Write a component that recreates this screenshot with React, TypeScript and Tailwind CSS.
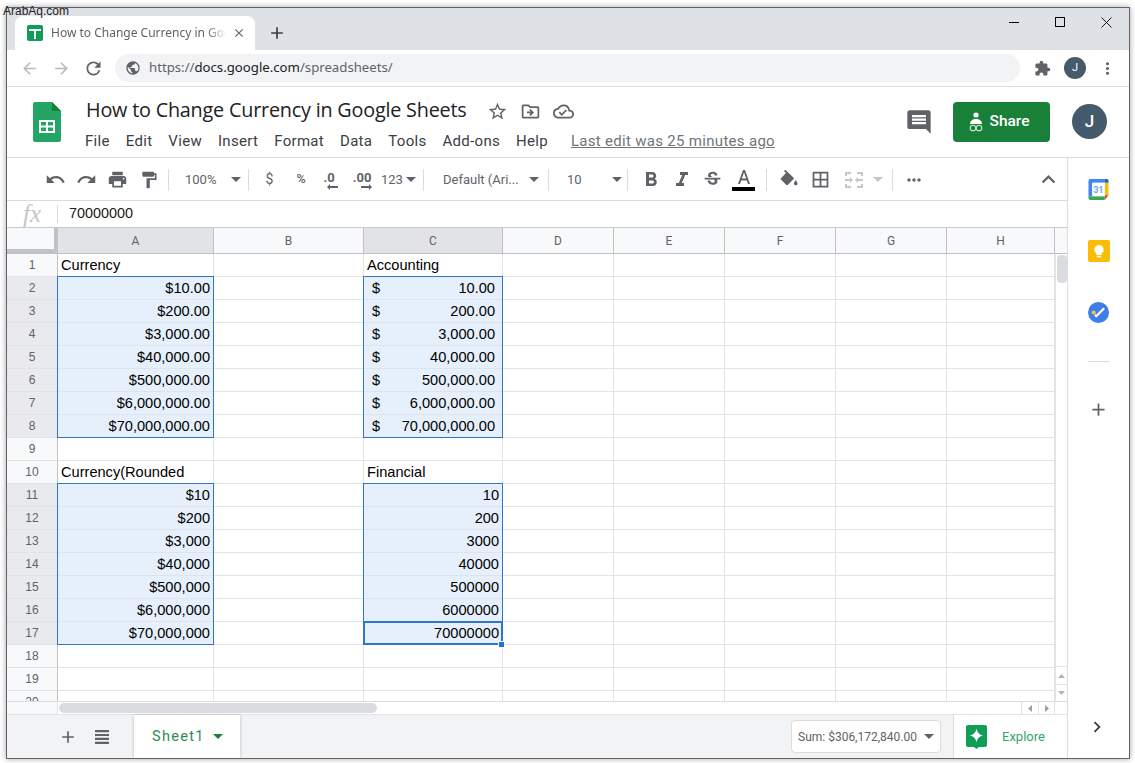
import React from "react";
import {
  MdArrowBack, MdArrowForward, MdRefresh, MdPublic, MdExtension, MdMoreVert, MdAdd, MdClose,
  MdUndo, MdRedo, MdPrint, MdFormatPaint, MdFormatBold, MdFormatItalic, MdStrikethroughS,
  MdBorderAll, MdMoreHoriz, MdKeyboardArrowUp, MdComment, MdStarBorder,
  MdOutlineDriveFileMove, MdOutlineCloudDone, MdChevronRight,
} from "react-icons/md";

const Sep = () => <div className="w-px h-[22px] bg-[#dadce0]" />;

const Caret = ({ className = "" }: { className?: string }) => (
  <svg width="10" height="5" viewBox="0 0 10 5" className={className}>
    <path d="M0 0h10L5 5z" fill="currentColor" />
  </svg>
);

const TB = ({ children, wide }: { children: React.ReactNode; wide?: boolean }) => (
  <div className={`${wide ? "w-[32px]" : "w-[31px]"} h-[24px] flex items-center justify-center text-[#5f6368]`}>{children}</div>
);

const SheetsLogo = () => (
  <svg width="28" height="40" viewBox="0 0 28 40">
    <path d="M2 0h17l9 9v29a2 2 0 0 1-2 2H2a2 2 0 0 1-2-2V2a2 2 0 0 1 2-2z" fill="#23a566" />
    <path d="M19 0l9 9h-9z" fill="#188038" />
    <path d="M6 18h16v13H6z M8 20v3.5h5V20z M15 20v3.5h5V20z M8 25.5V29h5v-3.5z M15 25.5V29h5v-3.5z" fill="#fff" fillRule="evenodd" />
  </svg>
);

const Calendar = () => (
  <svg width="21" height="21" viewBox="0 0 21 22">
    <path d="M2 0h15v4H4v14H0V2a2 2 0 0 1 2-2z" fill="#4285f4" />
    <path d="M17 0h2a2 2 0 0 1 2 2v2h-4z" fill="#1a5fc8" />
    <path d="M17 4h4v13h-4z" fill="#fbbc04" />
    <path d="M0 18h17v4H2a2 2 0 0 1-2-2z" fill="#34a853" />
    <path d="M17 17h4l-4 5z" fill="#ea4335" />
    <rect x="4" y="4" width="13" height="14" fill="#fff" />
    <text x="10.5" y="15" textAnchor="middle" fontSize="9" fontWeight="700" fill="#6f9fe8" fontFamily="Roboto, sans-serif">31</text>
  </svg>
);

const Keep = () => (
  <svg width="22" height="22" viewBox="0 0 22 22">
    <rect width="22" height="22" rx="2" fill="#fbbc04" />
    <path d="M11 5a4.6 4.6 0 0 0-2.6 8.4V15h5.2v-1.6A4.6 4.6 0 0 0 11 5z" fill="#fff" />
    <rect x="8.8" y="15.8" width="4.4" height="1.6" fill="#fff" />
  </svg>
);

const Tasks = () => (
  <svg width="21" height="21" viewBox="0 0 22 22">
    <circle cx="11" cy="11" r="11" fill="#3f7ee8" />
    <path d="M8 15.5l9-9" stroke="#fff" strokeWidth="2.4" fill="none" />
    <path d="M9 15l-1.6-1.6" stroke="#fff" strokeWidth="2.4" fill="none" />
    <circle cx="6" cy="11" r="2.2" fill="#f6bf4f" />
  </svg>
);

const ExploreIcon = () => (
  <svg width="21" height="24" viewBox="0 0 21 24">
    <path d="M2 0h17a2 2 0 0 1 2 2v18a2 2 0 0 1-2 2h-6l-2.5 2L8 22H2a2 2 0 0 1-2-2V2a2 2 0 0 1 2-2z" fill="#0f9d58" />
    <path d="M10.5 3.5c.7 4.2 2.8 6.3 7 7-4.2.7-6.3 2.8-7 7-.7-4.2-2.8-6.3-7-7 4.2-.7 6.3-2.8 7-7z" fill="#fff" />
  </svg>
);

const ShareIcon = () => (
  <svg width="16" height="20" viewBox="0 0 16 20">
    <circle cx="8" cy="3" r="2.6" fill="#fff" />
    <path d="M2 12c0-3 2.5-5 6-5s6 2 6 5z" fill="#fff" />
    <circle cx="5" cy="16" r="2.8" fill="none" stroke="#cfe8d8" strokeWidth="1.1" />
    <circle cx="11" cy="16" r="2.8" fill="none" stroke="#cfe8d8" strokeWidth="1.1" />
  </svg>
);

const MergeIcon = () => (
  <svg width="18" height="16" viewBox="0 0 18 16" fill="#c4c7ca">
    <path d="M0 0h6v2H2v2H0z M12 0h6v4h-2V2h-4z M0 12h2v2h4v2H0z M16 12h2v4h-6v-2h4z" />
    <path d="M0 7h5V5l3 3-3 3V9H0z M18 7h-5V5l-3 3 3 3V9h5z" />
  </svg>
);

const FillIcon = () => (
  <svg width="20" height="18" viewBox="0 0 22 18" className="-mt-[3px]">
    <path d="M8 0L6.6 1.4l2.2 2.2-5.3 5.3c-.6.6-.6 1.5 0 2.1l5.4 5.4c.6.6 1.5.6 2.1 0l5.9-5.9c.6-.6.6-1.5 0-2.1z" fill="currentColor" />
    <path d="M19.5 11.5s-2 2.2-2 3.5c0 1.1.9 2 2 2s2-.9 2-2c0-1.3-2-3.5-2-3.5z" fill="currentColor" />
  </svg>
);

const ColHead = ({ label, sel }: { label: string; sel?: boolean }) => (
  <div
    className={`border-r border-r-[#c0c0c0] flex items-center justify-center text-[12px] text-[#5f6368] ${
      sel ? "bg-[#e1e3e6]" : "bg-[#f8f9fa]"
    }`}
  >
    {label}
  </div>
);

type RowData = { n: number; sel?: boolean; a?: string; aLeft?: boolean; c?: string; cLeft?: boolean; acct?: boolean };

const rows: RowData[] = [
  { n: 1, a: "Currency", aLeft: true, c: "Accounting", cLeft: true },
  { n: 2, sel: true, a: "$10.00", c: "10.00", acct: true },
  { n: 3, sel: true, a: "$200.00", c: "200.00", acct: true },
  { n: 4, sel: true, a: "$3,000.00", c: "3,000.00", acct: true },
  { n: 5, sel: true, a: "$40,000.00", c: "40,000.00", acct: true },
  { n: 6, sel: true, a: "$500,000.00", c: "500,000.00", acct: true },
  { n: 7, sel: true, a: "$6,000,000.00", c: "6,000,000.00", acct: true },
  { n: 8, sel: true, a: "$70,000,000.00", c: "70,000,000.00", acct: true },
  { n: 9 },
  { n: 10, a: "Currency(Rounded", aLeft: true, c: "Financial", cLeft: true },
  { n: 11, sel: true, a: "$10", c: "10" },
  { n: 12, sel: true, a: "$200", c: "200" },
  { n: 13, sel: true, a: "$3,000", c: "3000" },
  { n: 14, sel: true, a: "$40,000", c: "40000" },
  { n: 15, sel: true, a: "$500,000", c: "500000" },
  { n: 16, sel: true, a: "$6,000,000", c: "6000000" },
  { n: 17, sel: true, a: "$70,000,000", c: "70000000" },
  { n: 18 },
  { n: 19 },
  { n: 20 },
];

const cell = "border-r border-b border-[#e2e3e3] h-[23px]";

const Row = ({ r }: { r: RowData }) => (
  <>
    <div
      className={`border-r border-b border-r-[#c0c0c0] border-b-[#e2e3e3] h-[23px] flex items-center justify-center text-[12px] text-[#5f6368] ${
        r.sel ? "bg-[#e8eaed]" : "bg-[#f8f9fa]"
      }`}
    >
      {r.n}
    </div>
    <div className={`${cell} flex items-end leading-[21px] px-[3px] ${r.sel ? "bg-[#e6f0fc]" : ""} ${r.aLeft ? "justify-start" : "justify-end"}`}>
      {r.a}
    </div>
    <div className={cell} />
    <div
      className={`${cell} flex items-end leading-[21px] ${r.sel ? "bg-[#e6f0fc]" : ""} ${r.cLeft ? "justify-start px-[3px]" : r.acct ? "justify-between pl-[8px] pr-[7px]" : "justify-end px-[3px]"}`}
    >
      {r.acct && <span>$</span>}
      <span>{r.c}</span>
    </div>
    <div className={cell} />
    <div className={cell} />
    <div className={cell} />
    <div className={cell} />
    <div className={cell} />
  </>
);

const Select = ({ className }: { className: string }) => (
  <div className={`absolute border border-[#2f75c9] pointer-events-none ${className}`} />
);

export default function App() {
  return (
    <div className="w-[1135px] h-[763px] bg-white relative overflow-hidden font-['Roboto',sans-serif] pt-[7px] pl-[6px]">
      <div className="w-[1124px] h-[752px] border border-[#5f6368] shadow-[0_0_6px_rgba(0,0,0,0.35)] bg-white flex flex-col overflow-hidden">
        {/* Tab strip */}
        <div className="h-[42px] shrink-0 bg-[#dee1e6] flex items-end pl-[8px]">
          <div className="w-[240px] h-[34px] bg-white rounded-t-[8px] flex items-center pl-[12px] pr-[8px]">
            <div className="w-[16px] h-[16px] rounded-[2px] bg-[#0f9d58] relative shrink-0 flex items-center justify-center">
              <svg width="12" height="12" viewBox="0 0 12 12">
                <path d="M0 2h12v2H7v8H5V4H0z" fill="#fff" />
              </svg>
            </div>
            <span className="ml-[8px] w-[176px] overflow-hidden whitespace-nowrap text-[12px] text-[#5f6368] font-['Noto_Sans',sans-serif] [mask-image:linear-gradient(to_right,black_88%,transparent)]">
              How to Change Currency in Google Sheets
            </span>
            <MdClose className="ml-[5px] text-[#5f6368] shrink-0" size={14} />
          </div>
          <div className="h-[34px] flex items-center ml-[12px]">
            <MdAdd size={20} className="text-[#3c4043]" />
          </div>
          <div className="flex-1" />
          <div className="self-start flex items-center h-[28px] text-[#202124]">
            <div className="w-[46px] flex justify-center">
              <div className="w-[10px] h-px bg-black" />
            </div>
            <div className="w-[46px] flex justify-center">
              <div className="w-[10px] h-[10px] border border-black" />
            </div>
            <div className="w-[46px] flex justify-center mr-[0px]">
              <svg width="11" height="11" viewBox="0 0 11 11">
                <path d="M0.5 0.5l10 10M10.5 0.5l-10 10" stroke="#000" strokeWidth="0.9" />
              </svg>
            </div>
          </div>
        </div>

        {/* Chrome toolbar */}
        <div className="h-[37px] shrink-0 border-b border-[#dadce0] flex items-center pl-[6px] text-[#5f6368]">
          <div className="w-[32px] flex justify-center">
            <MdArrowBack size={19} className="text-[#b6b9bd]" />
          </div>
          <div className="w-[32px] flex justify-center">
            <MdArrowForward size={19} className="text-[#b6b9bd]" />
          </div>
          <div className="w-[32px] flex justify-center">
            <MdRefresh size={21} className="text-[#5f6368]" />
          </div>
          <div className="ml-[6px] w-[905px] h-[28px] rounded-full bg-[#f1f3f4] flex items-center pl-[10px]">
            <MdPublic size={16} className="text-[#5f6368]" />
            <span className="ml-[8px] text-[13.2px] font-['Noto_Sans',sans-serif] text-[#5f6368] whitespace-nowrap">
              https://<span className="text-[#202124]">docs.google.com</span>/spreadsheets/
            </span>
          </div>
          <div className="ml-[13px] w-[18px] flex justify-center">
            <MdExtension size={17} className="text-[#5f6368]" />
          </div>
          <div className="ml-[13px] w-[22px] h-[22px] rounded-full bg-[#455a6a] text-white text-[11px] flex items-center justify-center">J</div>
          <div className="ml-[21px] flex justify-center">
            <MdMoreVert size={19} className="text-[#5f6368] -ml-[9px]" />
          </div>
        </div>

        {/* Doc header */}
        <div className="h-[71px] shrink-0 border-b border-[#dadce0] flex relative">
          <div className="pl-[26px] pt-[15px] w-[79px] shrink-0">
            <SheetsLogo />
          </div>
          <div className="flex flex-col">
            <div className="flex items-center h-[26px] mt-[10px]">
              <span className="text-[19.8px] text-[#202124] whitespace-nowrap font-['Open_Sans',sans-serif] tracking-[-0.2px]">
                How to Change Currency in Google Sheets
              </span>
              <div className="flex items-center ml-[20px] text-[#5f6368] gap-[12px] mt-[2px]">
                <MdStarBorder size={21} />
                <MdOutlineDriveFileMove size={21} />
                <MdOutlineCloudDone size={21} />
              </div>
            </div>
            <div className="flex items-center h-[20px] mt-[8px] -ml-[1px] text-[15px] text-[#3c4043] tracking-[0.3px] gap-[16px] whitespace-nowrap">
              <span>File</span>
              <span>Edit</span>
              <span>View</span>
              <span>Insert</span>
              <span>Format</span>
              <span>Data</span>
              <span>Tools</span>
              <span>Add-ons</span>
              <span>Help</span>
              <span className="ml-[7px] underline text-[#70757a]">Last edit was 25 minutes ago</span>
            </div>
          </div>
          <div className="flex-1" />
          <div className="flex items-center h-full pr-[22px] pb-[1px]">
            <MdComment size={28} className="text-[#5f6368]" />
            <div className="ml-[20px] w-[97px] h-[40px] bg-[#188038] rounded-[4px] flex items-center justify-center gap-[6px] text-white text-[15.5px] font-medium pr-[6px]">
              <ShareIcon />
              <span>Share</span>
            </div>
            <div className="ml-[22px] w-[35px] h-[35px] rounded-full bg-[#455a6a] text-white text-[17px] font-medium flex items-center justify-center">J</div>
          </div>
        </div>

        {/* Main */}
        <div className="flex-1 flex min-h-0">
          <div className="w-[1061px] shrink-0 flex flex-col min-h-0 border-r border-[#dadce0]">
            {/* Toolbar */}
            <div className="h-[43px] shrink-0 border-b border-[#dadce0] flex items-center pl-[33px] pt-[1px] text-[#5f6368] text-[13px]">
              <TB><MdUndo size={21} /></TB>
              <TB><MdRedo size={21} /></TB>
              <TB><MdPrint size={21} /></TB>
              <TB><MdFormatPaint size={20} /></TB>
              <div className="ml-[4px]"><Sep /></div>
              <div className="w-[62px] flex items-center pl-[16px]">100%</div>
              <Caret />
              <div className="ml-[7px]"><Sep /></div>
              <div className="w-[41px] text-center text-[14px]">$</div>
              <div className="w-[22px] text-center text-[12.5px] font-medium">%</div>
              <div className="w-[34px] flex flex-col items-center leading-[13px] font-bold text-[13px] pt-[2px] relative">
                <span>.0</span>
                <svg width="11" height="6" viewBox="0 0 11 6" className="ml-[6px]"><path d="M0 3l3-3v2h8v2H3v2z" fill="currentColor" /></svg>
              </div>
              <div className="w-[32px] flex flex-col items-center leading-[13px] font-bold text-[13px] pt-[2px]">
                <span>.00</span>
                <svg width="11" height="6" viewBox="0 0 11 6" className="ml-[8px]"><path d="M11 3L8 0v2H0v2h8v2z" fill="currentColor" /></svg>
              </div>
              <div className="ml-[3px] w-[25px] text-[13px]">123</div>
              <Caret />
              <div className="ml-[7px]"><Sep /></div>
              <div className="ml-[19px] w-[86px] whitespace-nowrap">Default (Ari...</div>
              <Caret />
              <div className="ml-[9px]"><Sep /></div>
              <div className="ml-[18px] w-[45px]">10</div>
              <Caret />
              <div className="ml-[5px]"><Sep /></div>
              <div className="ml-[7px] flex">
                <TB><MdFormatBold size={24} /></TB>
                <TB><MdFormatItalic size={24} /></TB>
                <TB><MdStrikethroughS size={21} /></TB>
                <TB>
                  <div className="flex flex-col items-center relative pt-[1px]">
                    <svg width="14" height="14" viewBox="0 0 14 14"><path d="M1 14L6 0h2l5 14h-2l-1.2-3.6H4.2L3 14zM4.8 8.6h4.4L7 2.4z" fill="currentColor" /></svg>
                    <div className="w-[23px] h-[4px] bg-black mt-[3px]" />
                  </div>
                </TB>
              </div>
              <div className="ml-[7px]"><Sep /></div>
              <div className="ml-[5px] flex">
                <TB wide><FillIcon /></TB>
                <TB wide><MdBorderAll size={21} /></TB>
                <div className="ml-[2px]"><TB wide><MergeIcon /></TB></div>
              </div>
              <Caret className="ml-[3px] text-[#c4c7ca]" />
              <div className="ml-[9px]"><Sep /></div>
              <div className="ml-[5px]"><TB><MdMoreHoriz size={20} /></TB></div>
              <div className="flex-1" />
              <div><TB><MdKeyboardArrowUp size={27} /></TB></div>
              <div className="w-[3px]" />
            </div>

            {/* Formula bar */}
            <div className="h-[27px] shrink-0 border-b border-[#c8cacc] flex items-center">
              <div className="w-[50px] text-center font-['Liberation_Serif',serif] italic text-[25px] text-[#c4c6c9] leading-none -mt-[2px]">fx</div>
              <div className="w-px h-[18px] bg-[#dadce0]" />
              <div className="ml-[11px] -mt-[1px] text-[14.4px] text-[#202124] font-['Liberation_Sans',sans-serif]">70000000</div>
            </div>

            {/* Sheet + scrollbar */}
            <div className="flex-1 flex flex-col min-h-0">
              <div className="flex h-[473px] shrink-0">
                <div className="w-[1048px] shrink-0 flex flex-col min-h-0">
                  <div className="h-[26px] shrink-0 border-b border-[#c0c0c0] grid grid-cols-[51px_156px_150px_139px_111px_111px_111px_111px_108px]">
                    <div className="bg-[#f8f9fa] border-r-[4px] border-b-[4px] border-[#c0c2c5]" />
                    <ColHead label="A" sel />
                    <ColHead label="B" />
                    <ColHead label="C" sel />
                    <ColHead label="D" />
                    <ColHead label="E" />
                    <ColHead label="F" />
                    <ColHead label="G" />
                    <ColHead label="H" />
                  </div>
                  <div className="relative flex-1 overflow-hidden font-['Liberation_Sans',sans-serif] text-[14.6px] text-black">
                    <div className="grid grid-cols-[51px_156px_150px_139px_111px_111px_111px_111px_108px]">
                      {rows.map((r) => (
                        <Row key={r.n} r={r} />
                      ))}
                    </div>
                    <Select className="left-[50px] top-[22px] w-[157px] h-[162px]" />
                    <Select className="left-[356px] top-[22px] w-[140px] h-[162px]" />
                    <Select className="left-[50px] top-[229px] w-[157px] h-[162px]" />
                    <Select className="left-[356px] top-[229px] w-[140px] h-[162px]" />
                    <div className="absolute left-[356px] top-[367px] w-[140px] h-[24px] border-2 border-[#2f75c9]" />
                    <div className="absolute left-[491px] top-[387px] w-[7px] h-[7px] bg-[#1a73e8] border border-white" />
                  </div>
                </div>
                <div className="flex-1 flex flex-col relative">
                  <div className="h-[26px] shrink-0 bg-[#f8f9fa] border-b border-[#c0c0c0]" />
                  <div className="flex-1 relative border-l border-[#e2e3e3]">
                    <div className="absolute left-[1px] top-[1px] w-[10px] h-[28px] rounded-[4px] bg-[#dadce0]" />
                    <div className="absolute left-0 right-0 bottom-[17px] h-[18px] border-t border-[#e2e3e3] flex items-center justify-center text-[#b0b3b6]">
                      <svg width="7" height="4" viewBox="0 0 7 4"><path d="M0 4h7L3.5 0z" fill="currentColor" /></svg>
                    </div>
                    <div className="absolute left-0 right-0 bottom-0 h-[17px] border-t border-[#e2e3e3] flex items-center justify-center text-[#b0b3b6]">
                      <svg width="7" height="4" viewBox="0 0 7 4"><path d="M0 0h7L3.5 4z" fill="currentColor" /></svg>
                    </div>
                  </div>
                </div>
              </div>

              {/* Horizontal scrollbar */}
              <div className="h-[13px] shrink-0 border-t border-[#dadce0] flex items-center relative">
                <div className="w-[51px] h-full bg-[#f8f9fa] border-r border-[#e2e3e3] shrink-0" />
                <div className="ml-px w-[318px] h-[10px] rounded-[5px] bg-[#dadce0]" />
                <div className="flex-1" />
                <div className="w-[17px] h-full border-l border-[#e2e3e3] flex items-center justify-center text-[#9aa0a6]">
                  <svg width="4" height="7" viewBox="0 0 4 7"><path d="M4 0v7L0 3.5z" fill="currentColor" /></svg>
                </div>
                <div className="w-[16px] h-full border-l border-[#e2e3e3] flex items-center justify-center text-[#9aa0a6]">
                  <svg width="4" height="7" viewBox="0 0 4 7"><path d="M0 0v7l4-3.5z" fill="currentColor" /></svg>
                </div>
                <div className="w-[13px] h-full border-l border-[#e2e3e3]" />
              </div>

              {/* Sheet tabs */}
              <div className="flex-1 bg-[#f1f3f4] flex items-stretch border-t border-[#e2e3e3]">
                <div className="w-[51px] shrink-0" />
                <div className="flex items-center text-[#5f6368] w-[76px] shrink-0">
                  <MdAdd size={20} />
                  <svg width="14" height="14" viewBox="0 0 14 14" className="ml-[17px]">
                    <path d="M0 0h14v2.2H0z M0 3.9h14v2.2H0z M0 7.8h14V10H0z M0 11.8h14V14H0z" fill="currentColor" />
                  </svg>
                </div>
                <div className="w-[106px] shrink-0 bg-white shadow-[0_0_3px_rgba(60,64,67,0.3)] flex items-center pl-[18px] text-[#2d8a57] text-[14.5px] tracking-[1.3px]">
                  Sheet1
                  <Caret className="ml-[8px] text-[#188038]" />
                </div>
                <div className="flex-1" />
                <div className="self-center w-[150px] h-[33px] bg-white border border-[#dadce0] rounded-[4px] flex items-center pl-[6px] text-[12px] text-[#5f6368] whitespace-nowrap">
                  Sum: $306,172,840.00
                  <Caret className="ml-[7px]" />
                </div>
                <div className="ml-[12px] w-[114px] shrink-0 bg-white border-l border-[#dadce0] flex items-center pl-[12px] text-[#188038]">
                  <ExploreIcon />
                  <span className="ml-[15px] text-[13px] text-[#34a36c]">Explore</span>
                </div>
              </div>
            </div>
          </div>

          {/* Side panel */}
          <div className="flex-1 flex flex-col items-center relative bg-white">
            <div className="mt-[21px] h-[21px]"><Calendar /></div>
            <div className="mt-[40px] h-[22px]"><Keep /></div>
            <div className="mt-[40px] h-[21px]"><Tasks /></div>
            <div className="mt-[38px] w-[22px] h-px bg-[#dadce0]" />
            <MdAdd size={21} className="mt-[37px] text-[#5f6368]" />
            <div className="flex-1" />
            <MdChevronRight size={22} className="mb-[20px] mr-[3px] text-[#3c4043]" />
          </div>
        </div>
      </div>
      <div className="absolute left-[3px] top-[4px] text-[12px] leading-[14px] text-[#222] font-['Liberation_Sans',sans-serif]">ArabAq.com</div>
    </div>
  );
}
